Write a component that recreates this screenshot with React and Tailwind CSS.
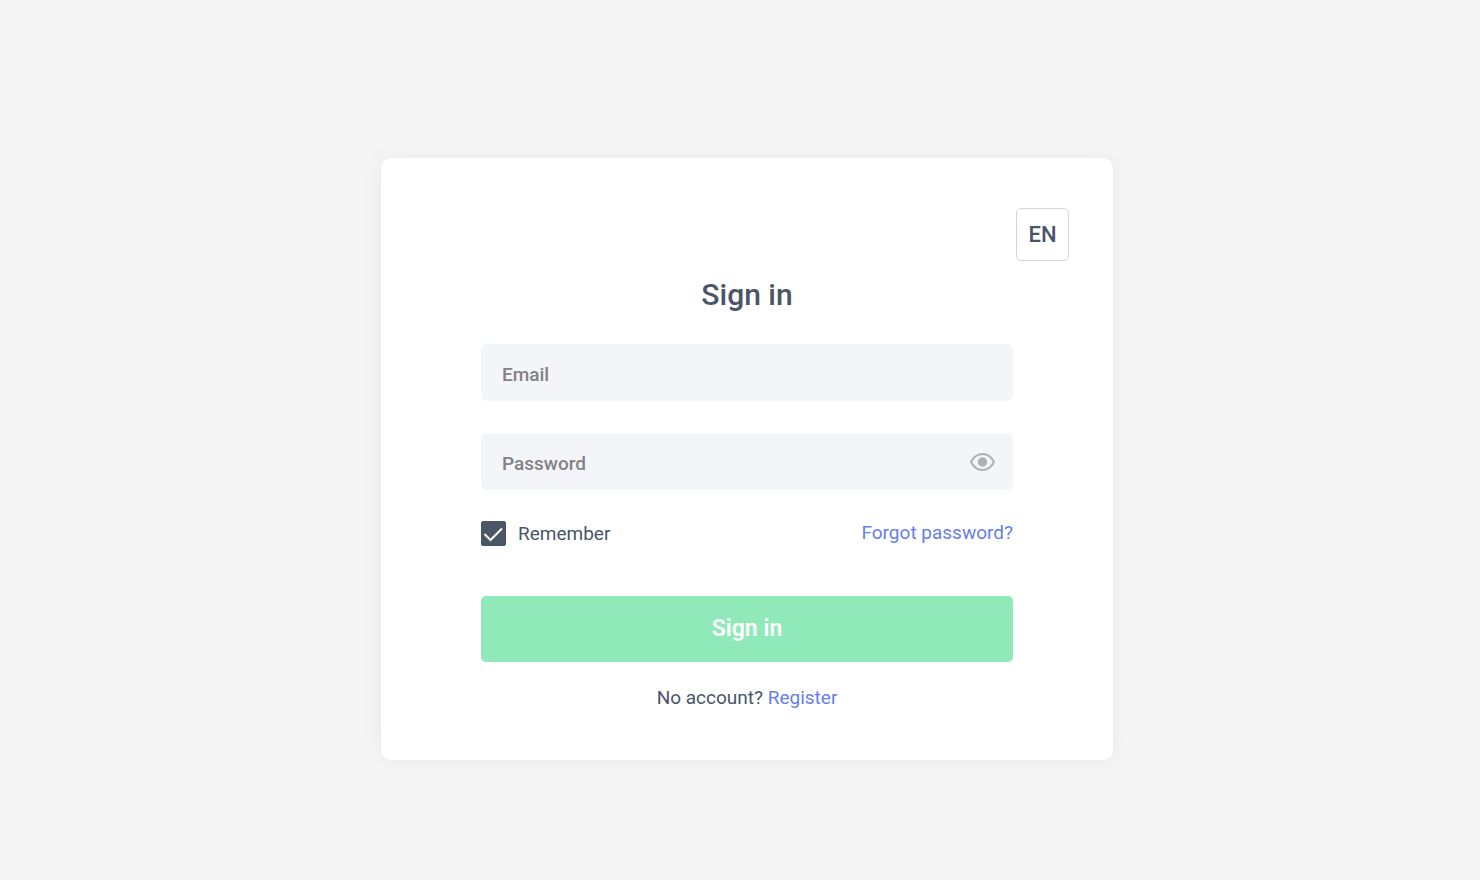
import React, { useState } from 'react';

function EyeIcon() {
  return (
    <svg width="25" height="20" viewBox="0 0 25 20" fill="none" aria-hidden="true">
      <path d="M1 10C3.500 5 7.500 2 12.500 2S21.500 5 24 10c-2.500 5-6.500 8-11.500 8S3.500 15 1 10Z" stroke="#aeb0b4" strokeWidth="1.900" strokeLinejoin="round" />
      <circle cx="12.500" cy="10" r="4.700" fill="#aeb0b4" />
    </svg>
  );
}

function App() {
  const [email, setEmail] = useState('');
  const [password, setPassword] = useState('');
  const [showPassword, setShowPassword] = useState(false);
  const [remember, setRemember] = useState(true);

  const handleSubmit = (event) => {
    event.preventDefault();
  };

  const inputClass = 'block w-full h-[57px] pt-[3px] px-[21px] rounded-md bg-[#f4f5f9] text-[19px] font-medium text-[#4a5568] placeholder:text-[#808285] focus:outline-none focus:ring-2 focus:ring-[#667eea]';

  return (
    <div className="min-h-screen flex items-center justify-center bg-[#f5f5f5] pt-[38px] pl-[14px] font-['Roboto',sans-serif] text-[#4a5568]">
      <main className="w-full max-w-[732px] rounded-[10px] bg-white pt-[50px] pb-[50px] shadow-[0_0_20px_rgba(0,0,0,0.06)]">
        <div className="flex justify-end pr-11">
          <button type="button" className="w-[53px] h-[53px] rounded-[5px] border border-[#d3d4d8] text-[22px] font-medium">
            EN
          </button>
        </div>

        <form onSubmit={handleSubmit} className="px-[100px]">
          <h1 className="mt-4 text-center text-[30px] leading-9 font-medium">Sign in</h1>

          <div className="mt-[31px] flex flex-col gap-8">
            <input
              type="email"
              aria-label="Email"
              placeholder="Email"
              value={email}
              onChange={(e) => setEmail(e.target.value)}
              className={inputClass}
            />
            <div className="relative">
              <input
                type={showPassword ? 'text' : 'password'}
                aria-label="Password"
                placeholder="Password"
                value={password}
                onChange={(e) => setPassword(e.target.value)}
                className={inputClass}
              />
              <button
                type="button"
                aria-label="Show password"
                onClick={() => setShowPassword(!showPassword)}
                className="absolute inset-y-0 right-0 flex items-center px-[18px]"
              >
                <EyeIcon />
              </button>
            </div>
          </div>

          <div className="mt-[31px] flex justify-between">
            <label className="flex items-center gap-3 text-[19px] leading-6">
              <span className="relative block w-[25px] h-[25px]">
                <input
                  type="checkbox"
                  checked={remember}
                  onChange={(e) => setRemember(e.target.checked)}
                  className="peer block w-full h-full appearance-none rounded-xs border border-[#4a5568] checked:bg-[#4a5568]"
                />
                <svg className="absolute inset-0 hidden pointer-events-none peer-checked:block" width="25" height="25" viewBox="0 0 25 25" fill="none" aria-hidden="true">
                  <path d="M3.500 13l6 6L21 7.500" stroke="#fff" strokeWidth="2" />
                </svg>
              </span>
              Remember
            </label>
            <a href="#forgot" className="text-[19px] leading-6 text-[#667eea]">Forgot password?</a>
          </div>

          <button type="submit" className="mt-[50px] block w-full h-[66px] rounded-[5px] bg-[#8fe9b8] text-[23px] font-semibold text-white">
            Sign in
          </button>

          <p className="mt-6 text-center text-[19px] leading-6">
            No account? <a href="#register" className="text-[#667eea]">Register</a>
          </p>
        </form>
      </main>
    </div>
  );
}

export default App;
